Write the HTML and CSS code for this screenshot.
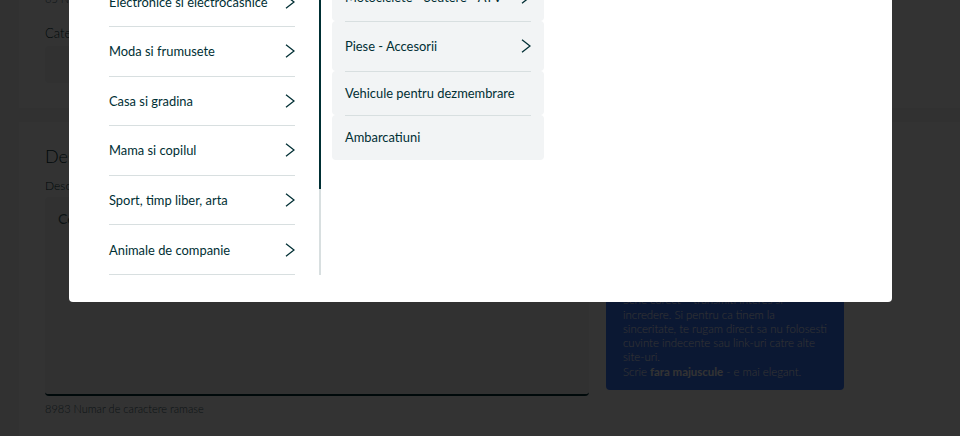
FILE: index.html
```html
<!DOCTYPE html>
<html lang="ro">
<head>
<meta charset="utf-8">
<title>Adauga anunt - Categorie</title>
<link rel="stylesheet" href="styles.css">
</head>
<body>
<main class="page">
  <section class="card card-cat">
    <p class="counter">65 Numar de caractere ramase</p>
    <label class="label">Categorie*</label>
    <div class="select"></div>
  </section>
  <section class="card card-desc">
    <h2 class="heading">Descriere</h2>
    <label class="label label-sm">Descriere*</label>
    <div class="desc-grid">
      <textarea class="textarea" placeholder="Ce ai vrea sa stie cumparatorul despre produsul tau?"></textarea>
      <aside class="tip">Spune-le cumparatorilor tot ce trebuie sa stie despre produs: starea, marca, modelul si motivul pentru care il vinzi.<br>Scrie corect – transmiti interes si incredere. Si pentru ca tinem la sinceritate, te rugam direct sa nu folosesti cuvinte indecente sau link-uri catre alte site-uri.<br>Scrie <b>fara majuscule</b> - e mai elegant.</aside>
    </div>
    <p class="counter counter-desc">8983 Numar de caractere ramase</p>
  </section>
</main>

<div class="overlay"></div>

<div class="modal" role="dialog">
  <div class="cats">
    <ul class="cat-list">
      <li class="cat"><span>Electronice si electrocasnice</span><svg class="chev" viewBox="0 0 10 14" width="10" height="14"><polyline points="1,0.8 9,7 1,13.2"/></svg></li>
      <li class="cat"><span>Moda si frumusete</span><svg class="chev" viewBox="0 0 10 14" width="10" height="14"><polyline points="1,0.8 9,7 1,13.2"/></svg></li>
      <li class="cat"><span>Casa si gradina</span><svg class="chev" viewBox="0 0 10 14" width="10" height="14"><polyline points="1,0.8 9,7 1,13.2"/></svg></li>
      <li class="cat"><span>Mama si copilul</span><svg class="chev" viewBox="0 0 10 14" width="10" height="14"><polyline points="1,0.8 9,7 1,13.2"/></svg></li>
      <li class="cat"><span>Sport, timp liber, arta</span><svg class="chev" viewBox="0 0 10 14" width="10" height="14"><polyline points="1,0.8 9,7 1,13.2"/></svg></li>
      <li class="cat"><span>Animale de companie</span><svg class="chev" viewBox="0 0 10 14" width="10" height="14"><polyline points="1,0.8 9,7 1,13.2"/></svg></li>
    </ul>
    <div class="track"><div class="thumb"></div></div>
  </div>
  <ul class="subs">
    <li class="sub"><div class="sub-in sub-icon"><span>Motociclete - Scutere - ATV</span><svg class="chev" viewBox="0 0 10 14" width="10" height="14"><polyline points="1,0.8 9,7 1,13.2"/></svg></div></li>
    <li class="sub"><div class="sub-in sub-icon"><span>Piese - Accesorii</span><svg class="chev" viewBox="0 0 10 14" width="10" height="14"><polyline points="1,0.8 9,7 1,13.2"/></svg></div></li>
    <li class="sub"><div class="sub-in"><span>Vehicule pentru dezmembrare</span></div></li>
    <li class="sub"><div class="sub-in"><span>Ambarcatiuni</span></div></li>
  </ul>
</div>
</body>
</html>
```

FILE: styles.css
```css
* { box-sizing: border-box; margin: 0; padding: 0; }

html, body { height: 100%; }

body {
  font-family: "Lato", "Noto Sans", sans-serif;
  color: #002f34;
  background: #f2f4f5;
  overflow: hidden;
  position: relative;
}

/* ---------- underlying page ---------- */
.page {
  padding-left: 19px;
  margin-top: -9px;
  display: flex;
  flex-direction: column;
  gap: 14px;
}

.card {
  background: #fff;
  padding: 0 26px 25px;
}

.card-cat { padding-bottom: 25px; }

.counter {
  font-size: 11px;
  line-height: 16px;
  color: #406367;
  font-weight: 300;
}

.label {
  display: block;
  font-size: 13px;
  line-height: 18px;
  margin-top: 17px;
  font-weight: 300;
}

.select {
  margin-top: 4px;
  height: 37px;
  width: 544px;
  background: #f2f4f5;
  border-radius: 4px;
}

.card-desc { padding-top: 22px; padding-bottom: 40px; }

.heading {
  font-size: 18px;
  line-height: 24px;
  font-weight: 300;
}

.label-sm {
  font-size: 12px;
  line-height: 16px;
  margin-top: 10px;
}

.desc-grid {
  margin-top: 3px;
  display: grid;
  grid-template-columns: 544px 238px;
  gap: 17px;
}

.textarea {
  display: block;
  height: 199px;
  border: none;
  border-bottom: 2px solid #002f34;
  border-radius: 4px;
  background: #f2f4f5;
  padding: 12px 13px;
  font-family: inherit;
  font-size: 14px;
  line-height: 20px;
  resize: none;
  color: #002f34;
}

.textarea::placeholder { color: #406367; }

.tip {
  align-self: end;
  margin-bottom: 6px;
  background: #3a77ff;
  color: #fff;
  border-radius: 4px;
  padding: 10px 16px 11px 17px;
  font-size: 11.4px;
  line-height: 14.3px;
  font-weight: 300;
}

.tip b { font-weight: 700; }

.counter-desc { margin-top: 5px; }

/* ---------- overlay + modal ---------- */
.overlay {
  position: absolute;
  inset: 0;
  background: rgba(0, 0, 0, 0.8);
}

.modal {
  position: absolute;
  left: 69px;
  top: -50px;
  width: 823px;
  background: #fff;
  border-radius: 4px;
  padding: 27.4px 40px 27px;
  display: flex;
  align-items: flex-start;
  font-size: 12.9px;
}

.cats {
  width: 212px;
  display: flex;
  justify-content: space-between;
}

.cat-list {
  width: 186px;
  list-style: none;
}

.cat {
  display: flex;
  align-items: center;
  justify-content: space-between;
  padding: 12.3px 0;
  line-height: 24px;
  border-bottom: 1px solid #d8dfe0;
}

.chev {
  flex: none;
  fill: none;
  stroke: #002f34;
  stroke-width: 1.3;
}

.track {
  width: 2px;
  background: #d8dfe0;
}

.thumb {
  height: 211.6px;
  background: #002f34;
}

.subs {
  width: 212px;
  margin-left: 11px;
  margin-top: -6px;
  list-style: none;
}

.sub {
  background: #f2f4f5;
  border-radius: 4px;
  padding: 0 13px;
}

.sub-in {
  display: flex;
  align-items: center;
  justify-content: space-between;
  border-top: 1px solid #d8dfe0;
  padding: 12.3px 0;
  line-height: 19px;
}

.sub-icon { line-height: 24px; }
```
